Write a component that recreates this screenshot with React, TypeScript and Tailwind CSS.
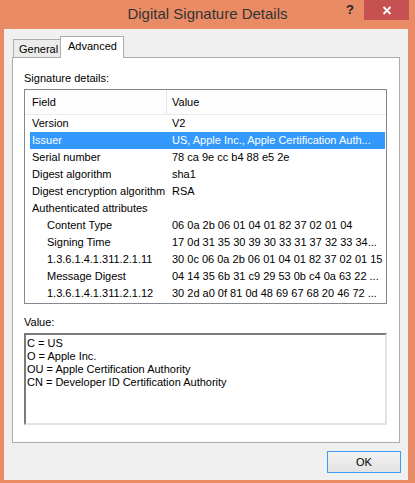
import React from 'react';

type Row = { field: string; value: string; indent?: boolean; selected?: boolean };

const rows: Row[] = [
  { field: 'Version', value: 'V2' },
  { field: 'Issuer', value: 'US, Apple Inc., Apple Certification Auth...', selected: true },
  { field: 'Serial number', value: '78 ca 9e cc b4 88 e5 2e' },
  { field: 'Digest algorithm', value: 'sha1' },
  { field: 'Digest encryption algorithm', value: 'RSA' },
  { field: 'Authenticated attributes', value: '' },
  { field: 'Content Type', value: '06 0a 2b 06 01 04 01 82 37 02 01 04', indent: true },
  { field: 'Signing Time', value: '17 0d 31 35 30 39 30 33 31 37 32 33 34...', indent: true },
  { field: '1.3.6.1.4.1.311.2.1.11', value: '30 0c 06 0a 2b 06 01 04 01 82 37 02 01 15', indent: true },
  { field: 'Message Digest', value: '04 14 35 6b 31 c9 29 53 0b c4 0a 63 22 ...', indent: true },
  { field: '1.3.6.1.4.1.311.2.1.12', value: '30 2d a0 0f 81 0d 48 69 67 68 20 46 72 ...', indent: true },
];

const valueLines = [
  'C = US',
  'O = Apple Inc.',
  'OU = Apple Certification Authority',
  'CN = Developer ID Certification Authority',
];

export default function App() {
  return (
    <div className="w-[415px] h-[483px] bg-[#e98c65] font-['Liberation_Sans',Arial,sans-serif] text-[11px] text-black overflow-hidden">
      {/* Title bar */}
      <div className="relative h-[29px] flex justify-center pt-[6px]">
        <span className="text-[15px] leading-[15px] text-[#333]">Digital Signature Details</span>
        <span className="absolute left-[346px] top-[2px] text-[13px] leading-[15px] font-bold text-[#222]">?</span>
        <div className="absolute left-[364px] top-0 w-[45px] h-[20px] bg-[#c75050] flex items-center justify-center">
          <svg width="10" height="9" viewBox="0 0 10 9">
            <path d="M1.5 1 L8.5 8 M8.5 1 L1.5 8" stroke="#fff" strokeWidth="1.8" fill="none" />
          </svg>
        </div>
      </div>

      {/* Client area */}
      <div className="ml-[4px] mr-[7px] h-[451px] bg-[#f0f0f0] pt-[7px] flex flex-col">
        <div className="mx-[8px]">
          {/* Tabs */}
          <div className="flex items-end h-[21px] ml-[1px]">
            <div className="w-[47px] h-[18px] border-l border-t border-[#acacac] bg-[#ebebeb] pl-[5px] pt-[3px] leading-[13px]">
              General
            </div>
            <div className="relative z-10 w-[64px] h-[22px] mb-[-1px] border-l border-t border-r border-[#acacac] bg-white pl-[7px] pt-[3px] leading-[13px]">
              Advanced
            </div>
          </div>

          {/* Tab panel */}
          <div className="h-[386px] border border-[#acacac] bg-white pt-[14px] pl-[11px] pr-[12px]">
            <div className="leading-[13px]">Signature details:</div>

            {/* List view */}
            <div className="mt-[4px] w-[363px] h-[215px] border border-[#828790] bg-white overflow-hidden">
              <div className="flex h-[25px] border-b border-[#e5eaf1] bg-[#fdfdfd]">
                <div className="w-[142px] border-r border-[#e5e5e5] pl-[7px] flex items-center">Field</div>
                <div className="flex-1 pl-[5px] flex items-center">Value</div>
              </div>
              <div className="pl-[5px] pr-[1px]">
                {rows.map((row) => (
                  <div
                    key={row.field}
                    className={`flex h-[17px] items-center whitespace-nowrap ${row.selected ? 'bg-[#3399ff] text-white' : ''}`}
                  >
                    <div className={`w-[136px] overflow-hidden ${row.indent ? 'pl-[17px]' : 'pl-[2px]'}`}>{row.field}</div>
                    <div className="flex-1 pl-[6px] overflow-hidden">{row.value}</div>
                  </div>
                ))}
              </div>
            </div>

            <div className="mt-[12px] leading-[13px]">Value:</div>

            {/* Value text box */}
            <div className="mt-[4px] w-[363px] h-[92px] border-2 border-t-[#7a7a7a] border-l-[#7a7a7a] border-r-[#e3e3e3] border-b-[#e3e3e3] bg-white pl-[1px] pt-[2px]">
              {valueLines.map((line) => (
                <div key={line} className="leading-[13px] whitespace-nowrap">
                  {line}
                </div>
              ))}
            </div>
          </div>
        </div>

        {/* Buttons */}
        <div className="flex justify-end mt-[8px] mr-[7px]">
          <button className="w-[74px] h-[22px] border border-[#3c9cf5] bg-gradient-to-b from-[#f2f2f2] to-[#e3e3e3] text-[11px] leading-[13px]">
            OK
          </button>
        </div>
      </div>
    </div>
  );
}
